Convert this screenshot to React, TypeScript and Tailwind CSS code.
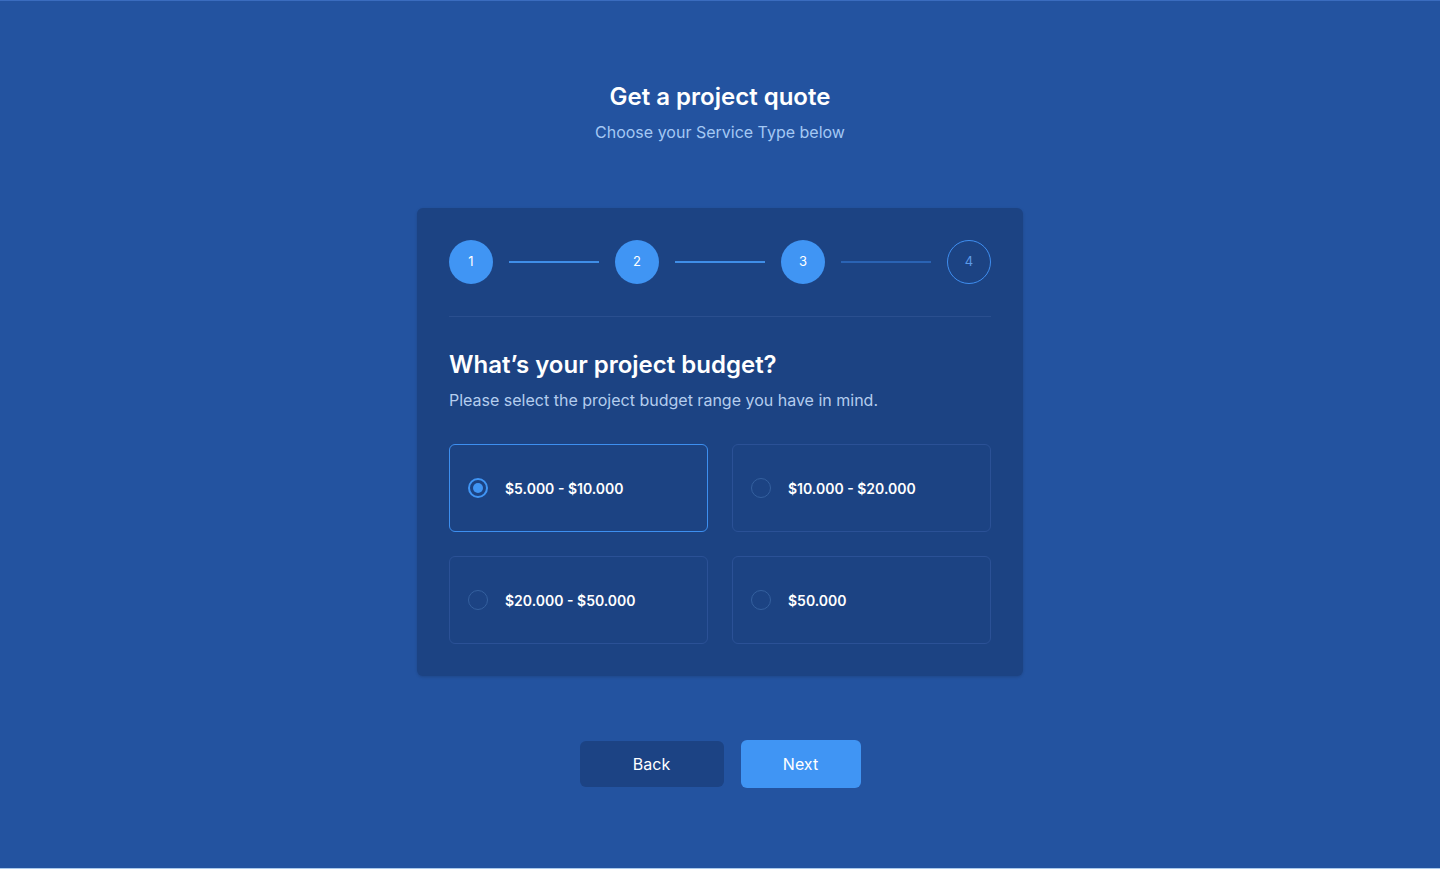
import { useState } from "react";

const options = ["$5.000 - $10.000", "$10.000 - $20.000", "$20.000 - $50.000", "$50.000"];

function Step({ n, done }: { n: number; done: boolean }) {
  return done ? (
    <div className="w-11 h-11 rounded-full bg-[#4095f4] flex items-center justify-center text-[13px] text-white shrink-0">
      {n}
    </div>
  ) : (
    <div className="w-11 h-11 rounded-full border border-[#3f8ef0] flex items-center justify-center text-[13px] text-[#5c9be8] shrink-0">
      {n}
    </div>
  );
}

export default function App() {
  const [selected, setSelected] = useState(0);

  return (
    <div
      className="min-h-[869px] bg-[#2353a0] border-t border-[#3a6cbf] border-b border-b-[#a9c9ec] flex flex-col items-center pt-[80px]"
      style={{ fontFamily: "Inter, 'Noto Sans', sans-serif" }}
    >
      <h1 className="text-[24px] leading-8 font-semibold text-white">Get a project quote</h1>
      <p className="mt-[7px] text-[16px] leading-6 text-[#a4c8f4]">Choose your Service Type below</p>

      <div className="mt-[64px] w-[606px] bg-[#1c4383] rounded-md p-8 shadow-[0_1px_3px_rgba(0,0,0,0.15)]">
        {/* stepper */}
        <div className="flex items-center">
          <Step n={1} done />
          <div className="flex-1 mx-4 h-[2px] bg-[#3f8ee8]" />
          <Step n={2} done />
          <div className="flex-1 mx-4 h-[2px] bg-[#3f8ee8]" />
          <Step n={3} done />
          <div className="flex-1 mx-4 h-[2px] bg-[#2a63b4]" />
          <Step n={4} done={false} />
        </div>

        <div className="mt-8 h-px bg-[#2a4f8f]" />

        <h2 className="mt-8 text-[24px] leading-8 font-semibold text-white">What’s your project budget?</h2>
        <p className="mt-[7px] text-[16px] leading-6 text-[#b4cdee]">
          Please select the project budget range you have in mind.
        </p>

        <div className="mt-8 grid grid-cols-2 gap-6">
          {options.map((o, i) => {
            const active = i === selected;
            return (
              <button
                key={o}
                onClick={() => setSelected(i)}
                className={
                  "h-[88px] rounded-md border flex items-center pl-[18px] gap-[17px] text-left " +
                  (active ? "border-[#3d8ff0]" : "border-[#2b5196]")
                }
              >
                {active ? (
                  <span className="w-5 h-5 rounded-full border-2 border-[#4095f4] flex items-center justify-center">
                    <span className="w-[10px] h-[10px] rounded-full bg-[#4095f4]" />
                  </span>
                ) : (
                  <span className="w-5 h-5 rounded-full border border-[#34609f]" />
                )}
                <span className="text-[14px] font-semibold text-white">{o}</span>
              </button>
            );
          })}
        </div>
      </div>

      <div className="mt-16 flex items-center gap-[17px]">
        <button className="w-[144px] h-[46px] rounded-md bg-[#1c4384] text-white text-[16px]">Back</button>
        <button className="w-[120px] h-[48px] rounded-md bg-[#4095f4] text-white text-[16px]">Next</button>
      </div>
    </div>
  );
}
